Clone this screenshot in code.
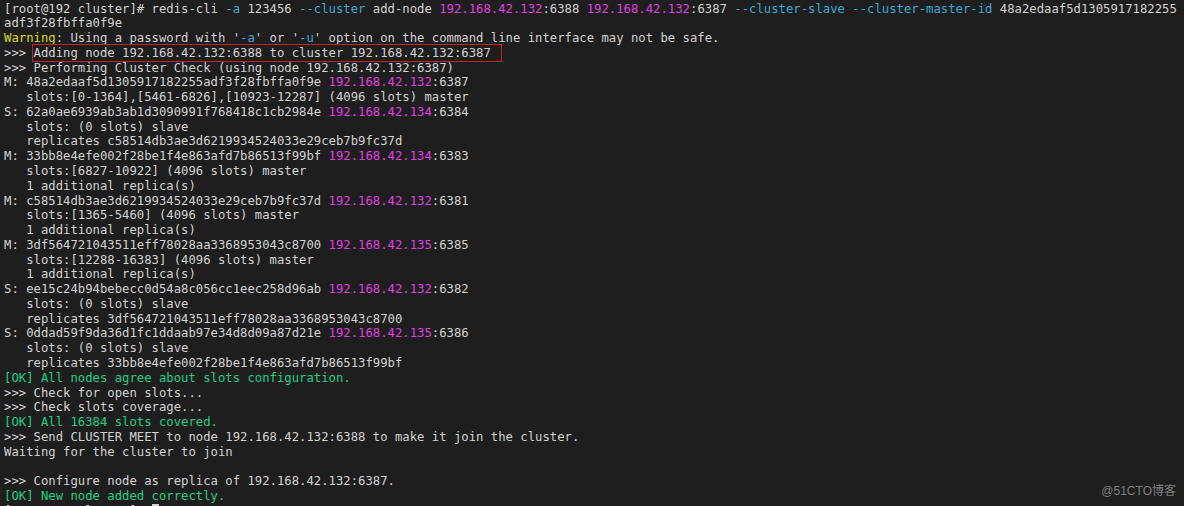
import React from 'react';

type Seg = { t: string; c?: string };

const W = '#d2d2d2';
const IP = 'text-[#e03ee0]';
const CY = 'text-[#3ba9d6]';
const GR = 'text-[#23cf87]';
const YE = 'text-[#dcdc1e]';

const node = (prefix: string, id: string, ip: string, port: string): Seg[] => [
  { t: `${prefix}: ${id} ` },
  { t: ip, c: IP },
  { t: `:${port}` },
];

const lines: Seg[][] = [
  [
    { t: '[root@192 cluster]# redis-cli ' },
    { t: '-a', c: CY },
    { t: ' 123456 ' },
    { t: '--cluster', c: CY },
    { t: ' add-node ' },
    { t: '192.168.42.132', c: IP },
    { t: ':6388 ' },
    { t: '192.168.42.132', c: IP },
    { t: ':6387 ' },
    { t: '--cluster-slave --cluster-master-id', c: CY },
    { t: ' 48a2edaaf5d1305917182255' },
  ],
  [{ t: 'adf3f28fbffa0f9e' }],
  [
    { t: 'Warning', c: YE },
    { t: ': Using a password with ' },
    { t: "'" },
    { t: '-a', c: CY },
    { t: "' or '" },
    { t: '-u', c: CY },
    { t: "' option on the command line interface may not be safe." },
  ],
  [{ t: '>>> ' }, { t: 'Adding node 192.168.42.132:6388 to cluster 192.168.42.132:6387', c: 'box' }],
  [{ t: '>>> Performing Cluster Check (using node 192.168.42.132:6387)' }],
  node('M', '48a2edaaf5d1305917182255adf3f28fbffa0f9e', '192.168.42.132', '6387'),
  [{ t: '   slots:[0-1364],[5461-6826],[10923-12287] (4096 slots) master' }],
  node('S', '62a0ae6939ab3ab1d3090991f768418c1cb2984e', '192.168.42.134', '6384'),
  [{ t: '   slots: (0 slots) slave' }],
  [{ t: '   replicates c58514db3ae3d6219934524033e29ceb7b9fc37d' }],
  node('M', '33bb8e4efe002f28be1f4e863afd7b86513f99bf', '192.168.42.134', '6383'),
  [{ t: '   slots:[6827-10922] (4096 slots) master' }],
  [{ t: '   1 additional replica(s)' }],
  node('M', 'c58514db3ae3d6219934524033e29ceb7b9fc37d', '192.168.42.132', '6381'),
  [{ t: '   slots:[1365-5460] (4096 slots) master' }],
  [{ t: '   1 additional replica(s)' }],
  node('M', '3df564721043511eff78028aa3368953043c8700', '192.168.42.135', '6385'),
  [{ t: '   slots:[12288-16383] (4096 slots) master' }],
  [{ t: '   1 additional replica(s)' }],
  node('S', 'ee15c24b94bebecc0d54a8c056cc1eec258d96ab', '192.168.42.132', '6382'),
  [{ t: '   slots: (0 slots) slave' }],
  [{ t: '   replicates 3df564721043511eff78028aa3368953043c8700' }],
  node('S', '0ddad59f9da36d1fc1ddaab97e34d8d09a87d21e', '192.168.42.135', '6386'),
  [{ t: '   slots: (0 slots) slave' }],
  [{ t: '   replicates 33bb8e4efe002f28be1f4e863afd7b86513f99bf' }],
  [{ t: '[OK] All nodes agree about slots configuration.', c: GR }],
  [{ t: '>>> Check for open slots...' }],
  [{ t: '>>> Check slots coverage...' }],
  [{ t: '[OK] All 16384 slots covered.', c: GR }],
  [{ t: '>>> Send CLUSTER MEET to node 192.168.42.132:6388 to make it join the cluster.' }],
  [{ t: 'Waiting for the cluster to join' }],
  [{ t: ' ' }],
  [{ t: '>>> Configure node as replica of 192.168.42.132:6387.' }],
  [{ t: '[OK] New node added correctly.', c: GR }],
];

export default function App() {
  return (
    <div className="relative w-[1184px] h-[506px] overflow-hidden bg-[#1e1e1e]">
      <div
        className="pl-[4px] pt-[1.6px] text-[12.25px] leading-[14.76px] whitespace-pre"
        style={{ color: W, fontFamily: '"DejaVu Sans Mono", monospace' }}
      >
        {lines.map((ln, i) => (
          <div key={i}>
            {ln.map((s, j) =>
              s.c === 'box' ? (
                <span key={j} className="outline outline-[1.5px] outline-[#c8202a] outline-offset-[1px] pr-[9px]">
                  {s.t}
                </span>
              ) : (
                <span key={j} className={s.c}>
                  {s.t}
                </span>
              )
            )}
          </div>
        ))}
        <div>
          <span>[root@192 cluster]# </span>
          <span className="inline-block w-[7px] h-[13px] align-top bg-[#d2d2d2]" />
        </div>
      </div>
      <div
        className="absolute right-[8px] bottom-[6px] text-[12px] text-[#7e7e7e]"
        style={{ fontFamily: '"Liberation Sans", "Noto Sans CJK SC", sans-serif' }}
      >
        @51CTO博客
      </div>
    </div>
  );
}
